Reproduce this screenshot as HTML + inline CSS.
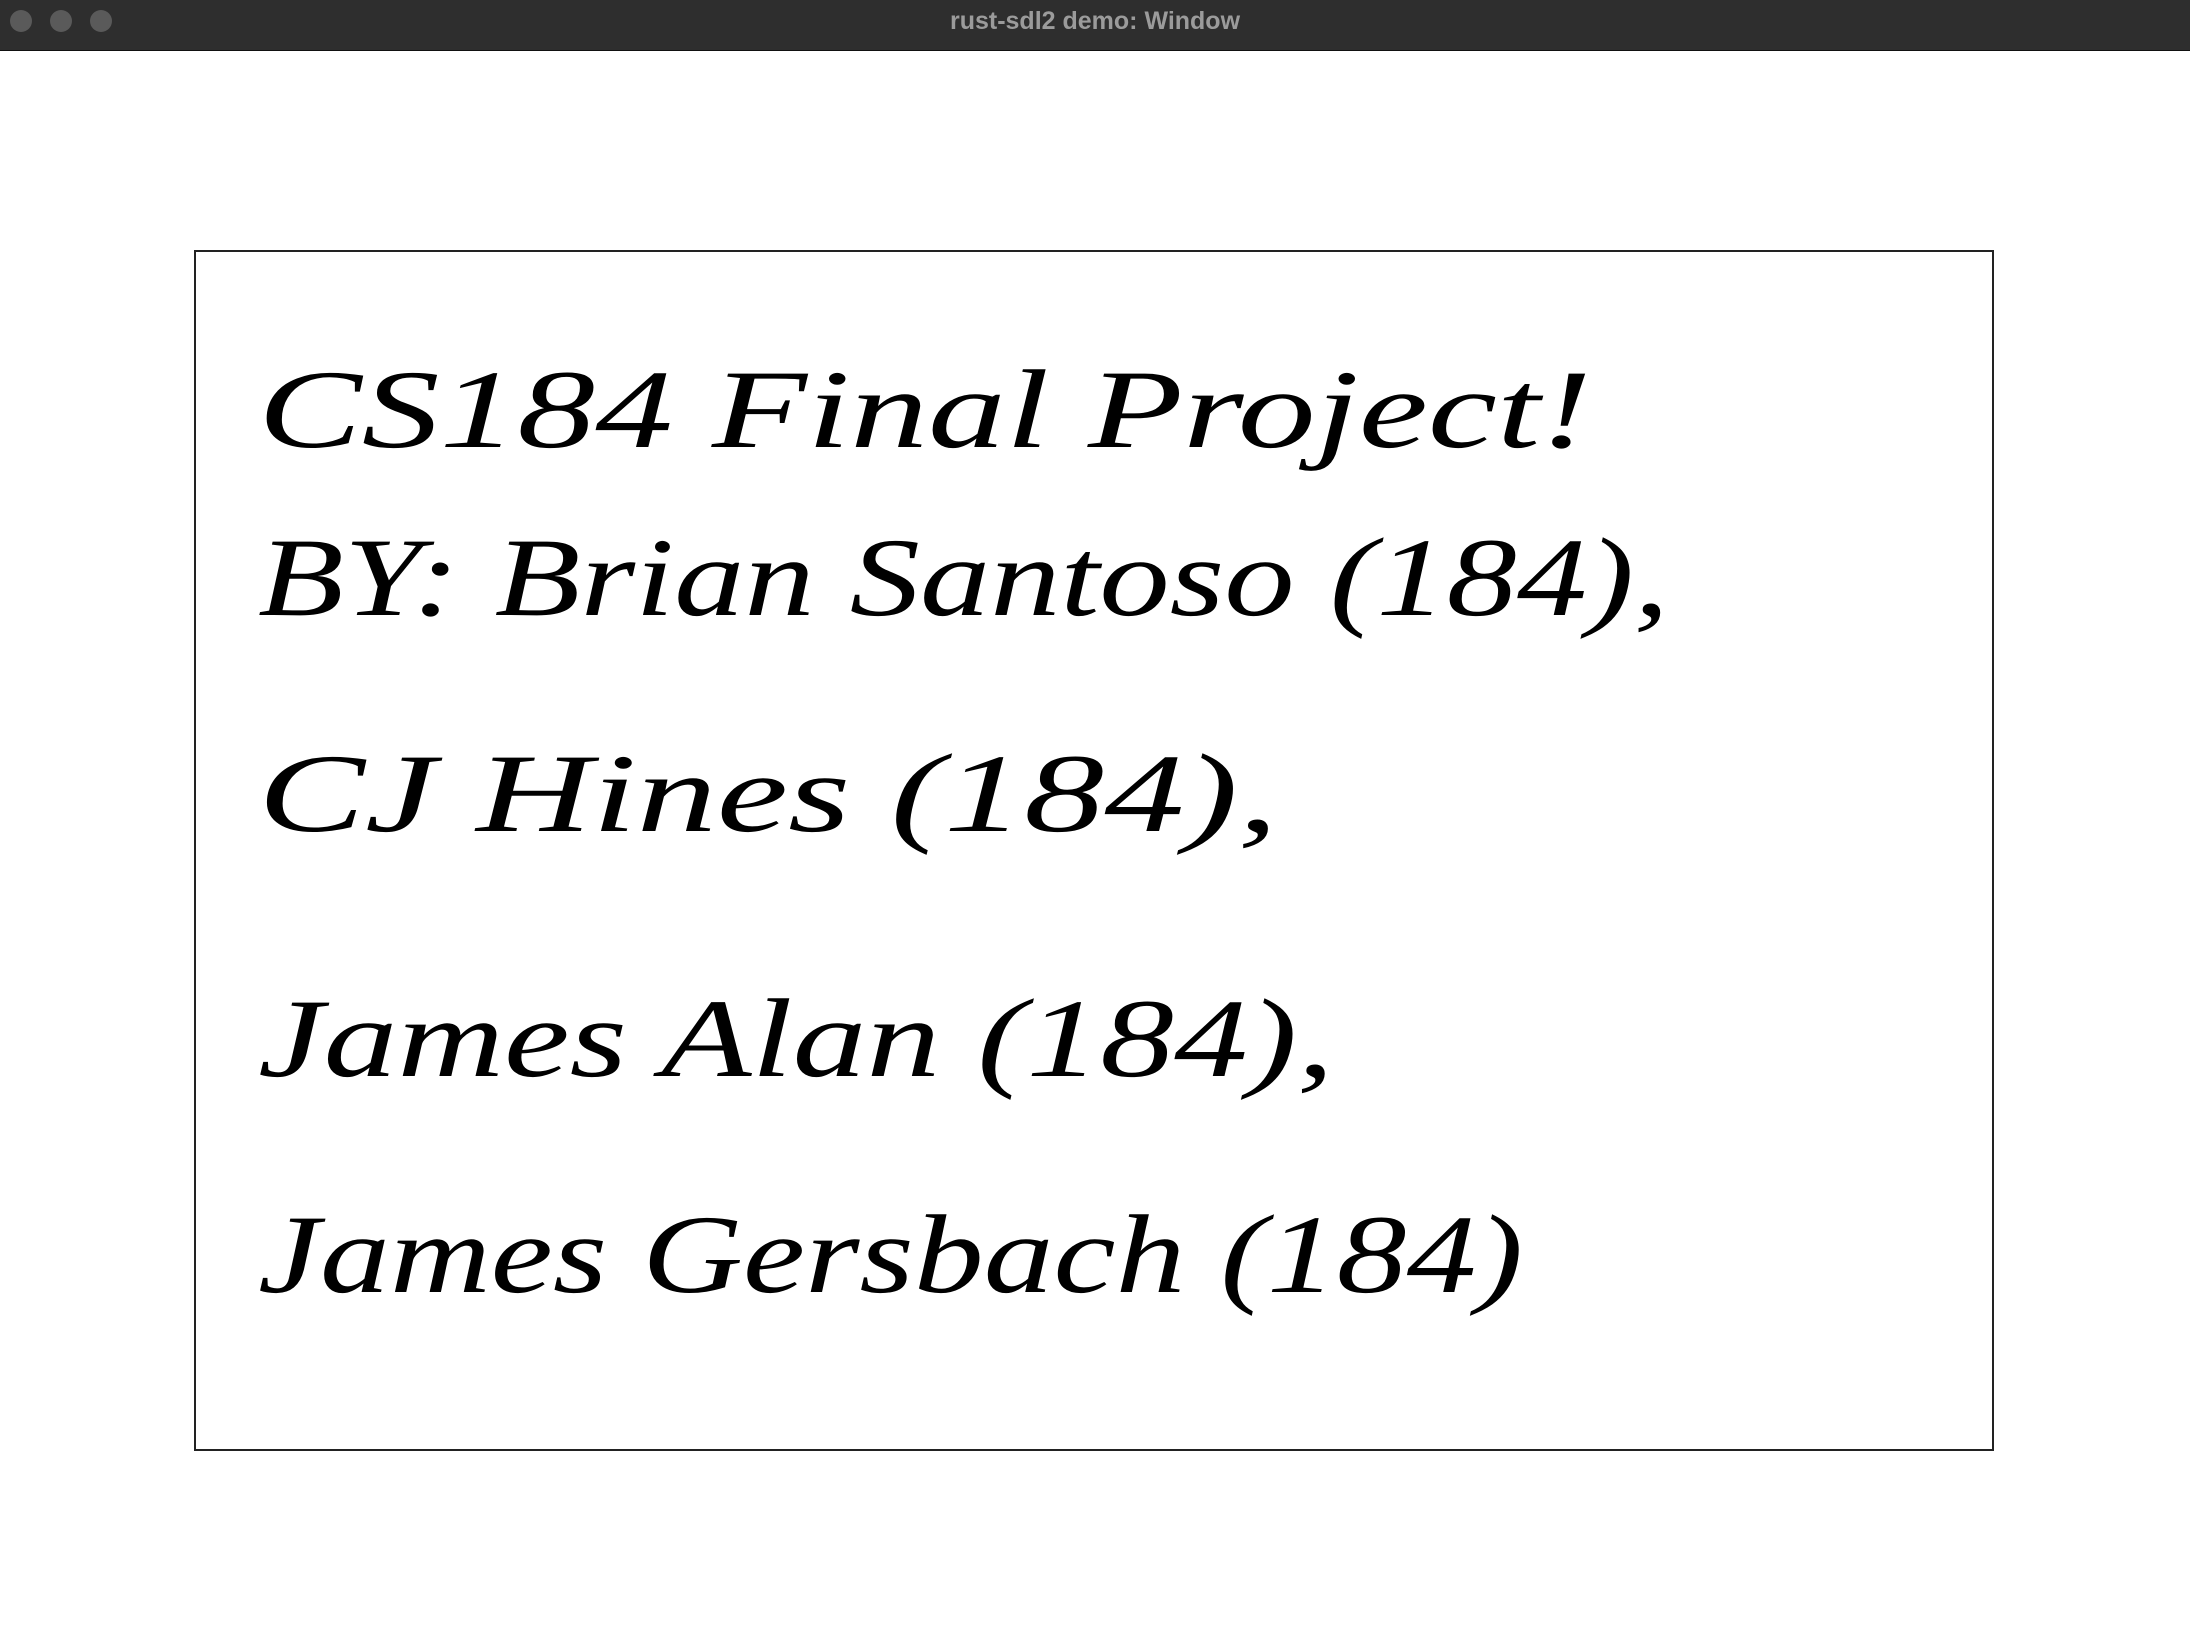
<!DOCTYPE html>
<html><head><meta charset="utf-8"><style>
html,body{margin:0;padding:0;width:2190px;height:1644px;background:#fff;overflow:hidden;position:relative}
.bar{position:absolute;left:0;top:0;width:2190px;height:50px;background:#2e2e2e;border-bottom:1px solid #111}
.dot{position:absolute;top:10px;width:22px;height:22px;border-radius:50%;background:#5a5a5a}
.title{position:absolute;top:7px;left:0;width:2190px;text-align:center;line-height:42px;font:bold 25px "Liberation Sans",sans-serif;color:#9b9b9b}
.box{position:absolute;left:194px;top:250px;width:1796px;height:1197px;border:2px solid #222}
.l{position:absolute;left:258px;font:italic 112px "Liberation Serif",serif;color:#000;white-space:nowrap;transform-origin:0 0;line-height:1}
</style></head><body>
<div class="bar"><div class="dot" style="left:10px"></div><div class="dot" style="left:50px"></div><div class="dot" style="left:90px"></div><div class="title">rust-sdl2 demo: Window</div></div>
<div class="box"></div>
<div class="l" data-w="1334" data-b="444">CS184 Final Project!</div>
<div class="l" data-w="1411" data-b="612">BY: Brian Santoso (184),</div>
<div class="l" data-w="1020" data-b="828">CJ Hines (184),</div>
<div class="l" data-w="1076" data-b="1073">James Alan (184),</div>
<div class="l" data-w="1265" data-b="1289">James Gersbach (184)</div>
<script>
document.querySelectorAll('.l').forEach(function(e){
 var w=+e.dataset.w,b=+e.dataset.b;
 var s=w/e.getBoundingClientRect().width;
 e.style.top=(b-90)+'px';
 e.style.transform='scaleX('+s+')';
});
</script>
</body></html>
